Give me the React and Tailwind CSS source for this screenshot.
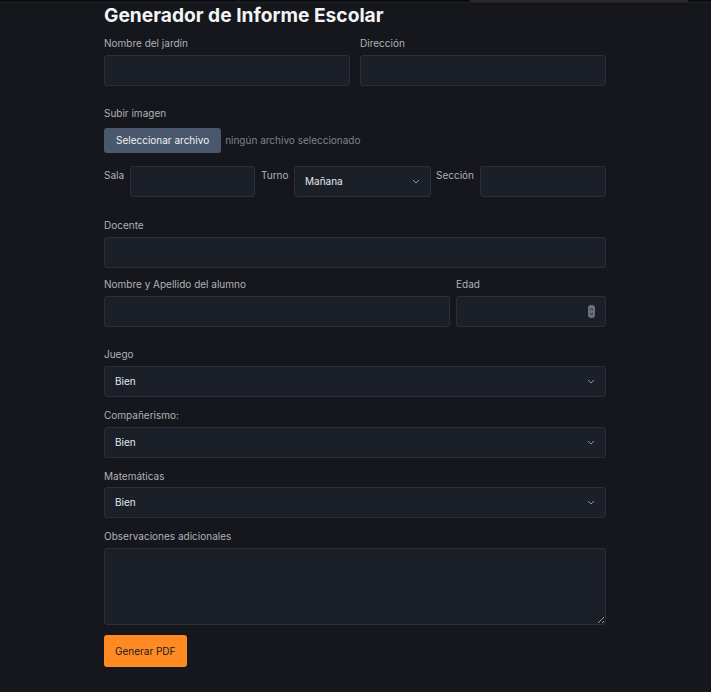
import React, { useState } from 'react';

const inputCls =
  'h-[31px] rounded-[3px] border border-[#2a2f3a] bg-[#1b1f27] px-2 text-[10px] text-[#e5e7eb] outline-none';

function Chevron() {
  return (
    <svg width="8" height="5" viewBox="0 0 8 5" className="text-[#8b909a]">
      <path d="M1 1l3 3 3-3" fill="none" stroke="currentColor" strokeWidth="1" />
    </svg>
  );
}

function FakeSelect({ value, className = '' }) {
  return (
    <div
      className={`flex h-[31px] items-center justify-between rounded-[3px] border border-[#2a2f3a] bg-[#1b1f27] pl-[10px] pr-[10px] text-[10px] text-[#e5e7eb] ${className}`}
    >
      <span>{value}</span>
      <Chevron />
    </div>
  );
}

function Label({ children, className = '' }) {
  return <div className={`text-[10px] leading-[16px] text-[#aeb2ba] ${className}`}>{children}</div>;
}

export default function App() {
  const [obs, setObs] = useState('');

  return (
    <div
      className="min-h-[692px] w-full bg-[#15171c]"
      style={{ fontFamily: 'Inter, "Noto Sans", sans-serif' }}
    >
      {/* franja superior */}
      <div className="flex h-[3px] border-b border-[#1f2127] bg-[#0d0e10]">
        <div className="w-[239px] border-r border-[#2a2a2a]" />
        <div className="w-[231px]" />
        <div className="w-[218px] border-r border-[#2a2a2a] bg-[#2b2b2d]" />
      </div>

      <div className="ml-[104px] w-[502px]">
        <h1 className="text-[19.2px] font-bold leading-[24px] text-[#f3f4f6]">
          Generador de Informe Escolar
        </h1>

        <div className="mt-[8px] flex gap-[10px]">
          <div className="flex-1">
            <Label>Nombre del jardín</Label>
            <input className={`${inputCls} mt-[4px] w-full`} />
          </div>
          <div className="flex-1">
            <Label>Dirección</Label>
            <input className={`${inputCls} mt-[4px] w-full`} />
          </div>
        </div>

        <Label className="mt-[19px]">Subir imagen</Label>
        <div className="mt-[7px] flex items-center gap-[4px]">
          <button className="h-[25px] rounded-[3px] bg-[#4a586d] px-[12px] text-[10px] text-[#eef0f3]">
            Seleccionar archivo
          </button>
          <span className="text-[10px] text-[#7d828c]">ningún archivo seleccionado</span>
        </div>

        <div className="mt-[13px] flex items-start">
          <Label className="mt-[1px] w-[26px] shrink-0">Sala</Label>
          <input className={`${inputCls} w-[125px] shrink-0`} />
          <Label className="ml-[6px] mt-[1px] w-[33px] shrink-0">Turno</Label>
          <FakeSelect value="Mañana" className="w-[137px] shrink-0" />
          <Label className="ml-[5px] mt-[1px] w-[44px] shrink-0">Sección</Label>
          <input className={`${inputCls} min-w-0 flex-1`} />
        </div>

        <Label className="mt-[20px]">Docente</Label>
        <input className={`${inputCls} mt-[4px] w-full`} />

        <div className="mt-[8px] flex gap-[6px]">
          <div className="flex-1">
            <Label>Nombre y Apellido del alumno</Label>
            <input className={`${inputCls} mt-[4px] w-full`} />
          </div>
          <div className="w-[150px]">
            <Label>Edad</Label>
            <div className="relative mt-[4px]">
              <input className={`${inputCls} w-full`} />
              <div className="absolute right-[11px] top-[9px] flex h-[13px] w-[7px] flex-col items-center justify-center rounded-[3px] bg-[#6b6f77]">
                <svg width="5" height="9" viewBox="0 0 5 9">
                  <path d="M1 3l1.5-1.5L4 3M1 6l1.5 1.5L4 6" fill="none" stroke="#1b1f27" strokeWidth="0.9" />
                </svg>
              </div>
            </div>
          </div>
        </div>

        <Label className="mt-[19px]">Juego</Label>
        <FakeSelect value="Bien" className="mt-[4px]" />

        <Label className="mt-[10px]">Compañerismo:</Label>
        <FakeSelect value="Bien" className="mt-[4px]" />

        <Label className="mt-[10px]">Matemáticas</Label>
        <FakeSelect value="Bien" className="mt-[3px]" />

        <Label className="mt-[10px]">Observaciones adicionales</Label>
        <textarea
          value={obs}
          onChange={(e) => setObs(e.target.value)}
          className="mt-[4px] block h-[77px] w-full rounded-[3px] border border-[#2a2f3a] bg-[#1b1f27] p-2 text-[10px] text-[#e5e7eb] outline-none"
        />

        <button className="mt-[10px] h-[32px] rounded-[3px] bg-[#ff8a24] px-[11px] text-[10px] text-[#1a1a1a]">
          Generar PDF
        </button>
      </div>
    </div>
  );
}
